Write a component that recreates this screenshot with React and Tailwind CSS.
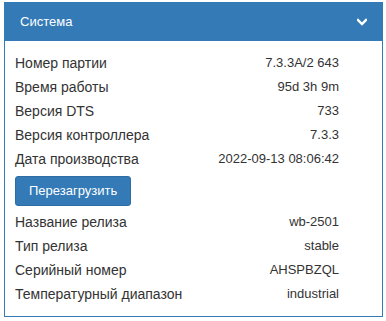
export default function App() {
  const rows1 = [
    ["Номер партии", "7.3.3A/2 643"],
    ["Время работы", "95d 3h 9m"],
    ["Версия DTS", "733"],
    ["Версия контроллера", "7.3.3"],
    ["Дата производства", "2022-09-13 08:06:42"],
  ];
  const rows2 = [
    ["Название релиза", "wb-2501"],
    ["Тип релиза", "stable"],
    ["Серийный номер", "AHSPBZQL"],
    ["Температурный диапазон", "industrial"],
  ];
  const Row = ({ l, v }) => (
    <div className="flex h-[24px] items-center justify-between">
      <span className="text-[14px]">{l}</span>
      <span className="text-[13px]">{v}</span>
    </div>
  );
  return (
    <div className="bg-white pl-[4px] pt-[2px] w-[386px] h-[321px]" style={{ fontFamily: '"Liberation Sans", Arial, sans-serif' }}>
      <div className="w-[379px] border border-[#337ab7]">
        <div className="h-[38px] bg-[#337ab7] flex items-center justify-between pl-[15px] pr-[15px] text-white text-[13px]">
          <span>Система</span>
          <svg width="10" height="8" viewBox="0 0 10 8">
            <path d="M1 2 L5 6 L9 2" stroke="white" strokeWidth="2.4" fill="none" strokeLinecap="square" />
          </svg>
        </div>
        <div className="pl-[10px] pt-[10px] pb-[10px] w-[334px] text-[#333]">
          {rows1.map(([l, v]) => <Row key={l} l={l} v={v} />)}
          <div className="mt-[5px] mb-[4px]">
            <button className="h-[30px] px-[13px] bg-[#337ab7] border border-[#2e6da4] rounded-[3px] text-white text-[13px]">Перезагрузить</button>
          </div>
          {rows2.map(([l, v]) => <Row key={l} l={l} v={v} />)}
        </div>
      </div>
    </div>
  );
}
